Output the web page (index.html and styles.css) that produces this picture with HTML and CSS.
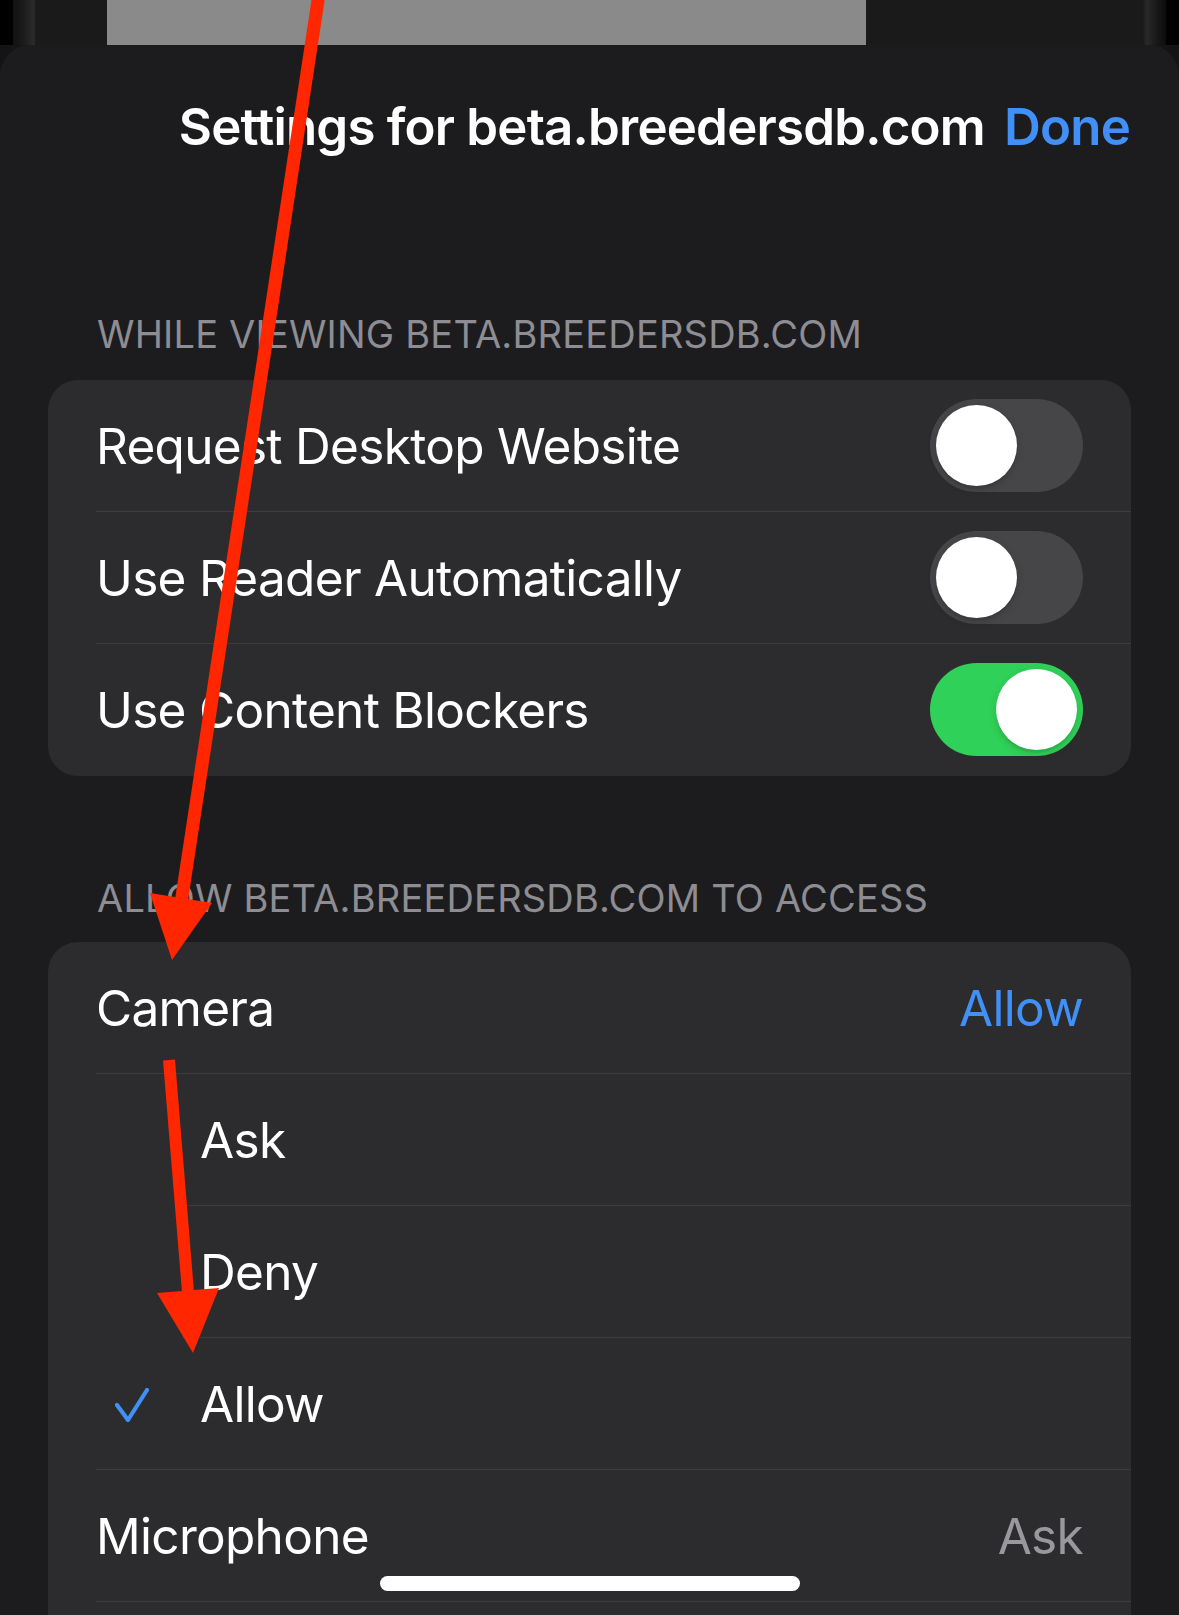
FILE: index.html
```html
<!DOCTYPE html>
<html lang="en">
<head>
<meta charset="utf-8">
<title>Settings for beta.breedersdb.com</title>
<link rel="stylesheet" href="styles.css">
</head>
<body>
<div class="screen">
  <div class="behind">
    <div class="edge"></div>
    <div class="bezel"></div>
    <div class="dim dim-left"></div>
    <div class="page-preview"></div>
    <div class="dim dim-right"></div>
    <div class="bezel bezel-right"></div>
    <div class="edge"></div>
  </div>

  <div class="sheet">
    <div class="nav">
      <span class="nav-title">Settings for beta.breedersdb.com</span>
      <span class="nav-done">Done</span>
    </div>

    <div class="section-header first">WHILE VIEWING BETA.BREEDERSDB.COM</div>
    <div class="card">
      <div class="row">
        <div class="row-body">
          <span class="label">Request Desktop Website</span>
          <span class="switch"><span class="knob"></span></span>
        </div>
      </div>
      <div class="row">
        <div class="row-body">
          <span class="label">Use Reader Automatically</span>
          <span class="switch"><span class="knob"></span></span>
        </div>
      </div>
      <div class="row">
        <div class="row-body last">
          <span class="label">Use Content Blockers</span>
          <span class="switch on"><span class="knob"></span></span>
        </div>
      </div>
    </div>

    <div class="section-header second">ALLOW BETA.BREEDERSDB.COM TO ACCESS</div>
    <div class="card">
      <div class="row">
        <div class="row-body">
          <span class="label">Camera</span>
          <span class="value blue">Allow</span>
        </div>
      </div>
      <div class="row sub">
        <div class="check-slot"></div>
        <div class="row-body">
          <span class="label">Ask</span>
        </div>
      </div>
      <div class="row sub">
        <div class="check-slot"></div>
        <div class="row-body">
          <span class="label">Deny</span>
        </div>
      </div>
      <div class="row sub selected">
        <div class="check-slot">
          <svg class="check" viewBox="0 0 34 34" width="34" height="34" aria-hidden="true">
            <polyline points="2,17 13,32 32,2" fill="none" stroke="#4090f7" stroke-width="4.2" stroke-linecap="round" stroke-linejoin="round"/>
          </svg>
        </div>
        <div class="row-body">
          <span class="label">Allow</span>
        </div>
      </div>
      <div class="row">
        <div class="row-body">
          <span class="label">Microphone</span>
          <span class="value gray">Ask</span>
        </div>
      </div>
      <div class="row">
        <div class="row-body last"></div>
      </div>
    </div>
  </div>

  <div class="home-indicator"></div>

  <svg class="annotations" viewBox="0 0 1179 1615" width="1179" height="1615" aria-hidden="true">
    <line x1="319" y1="-6" x2="181.5" y2="900" stroke="#ff2600" stroke-width="13"/>
    <polygon points="150,893 212,903 172,960" fill="#ff2600"/>
    <line x1="169" y1="1060" x2="188" y2="1292" stroke="#ff2600" stroke-width="12"/>
    <polygon points="157,1293 219,1288 193,1353" fill="#ff2600"/>
  </svg>
</div>
</body>
</html>
```

FILE: styles.css
```css
* {
  box-sizing: border-box;
}

html,
body {
  margin: 0;
  padding: 0;
  background: #000;
}

body {
  width: 1179px;
  height: 1615px;
  overflow: hidden;
  font-family: "Inter", "Noto Sans", "Liberation Sans", sans-serif;
  color: #fff;
}

.screen {
  position: relative;
  width: 1179px;
  height: 1615px;
  overflow: hidden;
  background: #141414;
}

/* what is behind the sheet */
.behind {
  display: flex;
  height: 45px;
  margin-bottom: -1px;
}

.edge {
  width: 13px;
  background: #000;
}

.bezel {
  width: 24px;
  background: linear-gradient(90deg, #111 0%, #1d1d1d 50%, #2b2b2b 85%, #161616 100%);
}

.bezel-right {
  background: linear-gradient(90deg, #161616 0%, #2a2a2a 20%, #1d1d1d 50%, #0c0c0c 100%);
}

.dim {
  background: #1a1a1a;
}

.dim-left {
  width: 70px;
}

.dim-right {
  width: 276px;
}

.page-preview {
  width: 759px;
  background: #8a8a8a;
}

/* sheet */
.sheet {
  background: #1c1c1e;
  border-radius: 32px 32px 0 0;
  height: 1571px;
  padding: 0 48px;
}

.nav {
  display: flex;
  justify-content: flex-end;
  align-items: baseline;
  gap: 19px;
  padding-top: 53px;
  padding-right: 1px;
  height: 114px;
  font-size: 51px;
  line-height: 60px;
  font-weight: 600;
  letter-spacing: -0.8px;
}

.nav-title {
  color: #fff;
}

.nav-done {
  color: #4090f7;
}

.section-header {
  padding-left: 49px;
  font-size: 38px;
  line-height: 46px;
  color: #8d8d93;
  letter-spacing: 0.2px;
}

.section-header.first {
  margin-top: 153px;
  margin-bottom: 23px;
}

.section-header.second {
  margin-top: 99px;
  margin-bottom: 21px;
}

.card {
  background: #2c2c2e;
  border-radius: 30px;
  overflow: hidden;
}

.row {
  display: flex;
  height: 132px;
  padding-left: 48px;
}

.row.sub {
  padding-left: 0;
}

.check-slot {
  width: 134px;
  flex: none;
  display: flex;
  align-items: center;
  padding-left: 67px;
  border-bottom: 1px solid transparent;
}

.row.selected .check-slot {
  width: 86px;
  margin-left: 48px;
  padding-left: 19px;
  border-bottom-color: #3d3d41;
}

.check {
  display: block;
  margin-top: 2px;
}

.row-body {
  flex: 1;
  display: flex;
  align-items: center;
  justify-content: space-between;
  padding-right: 48px;
  border-bottom: 1px solid #3d3d41;
}

.row.sub .row-body {
  padding-left: 18px;
}

.row-body.last {
  border-bottom-color: transparent;
}

.label,
.value {
  font-size: 49.5px;
  line-height: 60px;
  letter-spacing: -0.7px;
}

.label {
  color: #fff;
}

.value.blue {
  color: #4090f7;
}

.value.gray {
  color: #98989d;
}

.switch {
  flex: none;
  display: flex;
  align-items: center;
  width: 153px;
  height: 93px;
  padding: 6px;
  border-radius: 47px;
  background: #464649;
}

.switch.on {
  justify-content: flex-end;
  background: #30d158;
}

.knob {
  width: 81px;
  height: 81px;
  border-radius: 50%;
  background: #fff;
  box-shadow: 0 3px 8px rgba(0, 0, 0, 0.15), 0 3px 1px rgba(0, 0, 0, 0.06);
}

.home-indicator {
  position: absolute;
  left: 380px;
  top: 1576px;
  width: 420px;
  height: 15px;
  border-radius: 8px;
  background: #fff;
}

.annotations {
  position: absolute;
  left: 0;
  top: 0;
  pointer-events: none;
}
```
